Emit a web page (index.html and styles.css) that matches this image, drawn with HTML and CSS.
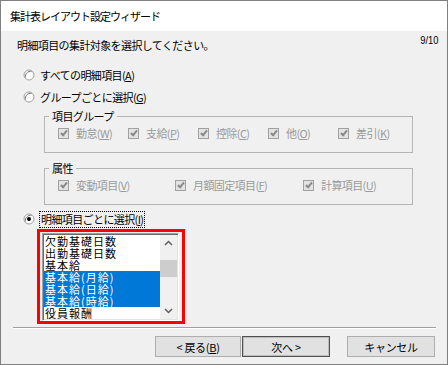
FILE: index.html
```html
<html>
<head>
  <meta charset="UTF-8" />
  <title>集計表レイアウト設定ウィザード</title>
  <link rel="stylesheet" href="styles.css">
</head>
<body>

  <div class="window">
    <div class="titlebar">集計表レイアウト設定ウィザード</div>

    <div class="content">
      <div class="head">
        <p class="prompt">明細項目の集計対象を選択してください。</p>
        <span class="page">9/10</span>
      </div>

      <label class="radio">
        <svg width="12" height="12" viewBox="0 0 12 12"><circle cx="6" cy="6" r="5" fill="#fff" stroke="#a0a0a0"/><path d="M2.5 8.5 A5 5 0 0 1 8.5 2.5" fill="none" stroke="#7a7a7a"/></svg>
        <span>すべての明細項目(<u>A</u>)</span>
      </label>
      <label class="radio">
        <svg width="12" height="12" viewBox="0 0 12 12"><circle cx="6" cy="6" r="5" fill="#fff" stroke="#a0a0a0"/><path d="M2.5 8.5 A5 5 0 0 1 8.5 2.5" fill="none" stroke="#7a7a7a"/></svg>
        <span>グループごとに選択(<u>G</u>)</span>
      </label>

      <fieldset class="group">
        <legend>項目グループ</legend>
        <div class="checks checks-five">
          <span class="check"><i class="box"></i><span>勤怠(<u>W</u>)</span></span>
          <span class="check"><i class="box"></i><span>支給(<u>P</u>)</span></span>
          <span class="check"><i class="box"></i><span>控除(<u>C</u>)</span></span>
          <span class="check"><i class="box"></i><span>他(<u>O</u>)</span></span>
          <span class="check"><i class="box"></i><span>差引(<u>K</u>)</span></span>
        </div>
      </fieldset>

      <fieldset class="group group-attr">
        <legend>属性</legend>
        <div class="checks checks-three">
          <span class="check"><i class="box"></i><span>変動項目(<u>V</u>)</span></span>
          <span class="check"><i class="box"></i><span>月額固定項目(<u>F</u>)</span></span>
          <span class="check"><i class="box"></i><span>計算項目(<u>U</u>)</span></span>
        </div>
      </fieldset>

      <label class="radio radio-last">
        <svg width="12" height="12" viewBox="0 0 12 12"><circle cx="6" cy="6" r="5" fill="#fff" stroke="#a0a0a0"/><path d="M2.5 8.5 A5 5 0 0 1 8.5 2.5" fill="none" stroke="#7a7a7a"/><circle cx="6" cy="6" r="2" fill="#000"/></svg>
        <span class="focus">明細項目ごとに選択(<u>I</u>)</span>
      </label>

      <div class="picker">
        <div class="listbox">
          <ul class="items">
            <li>欠勤基礎日数</li>
            <li>出勤基礎日数</li>
            <li>基本給</li>
            <li class="selected">基本給(月給)</li>
            <li class="selected">基本給(日給)</li>
            <li class="selected">基本給(時給)</li>
            <li>役員報酬</li>
          </ul>
          <div class="scrollbar">
            <svg width="17" height="17" viewBox="0 0 17 17"><path d="M5 10 L8.5 6.5 L12 10" fill="none" stroke="#606060" stroke-width="1.5"/></svg>
            <div class="track"><div class="thumb"></div></div>
            <svg width="17" height="17" viewBox="0 0 17 17"><path d="M5 7 L8.5 10.5 L12 7" fill="none" stroke="#606060" stroke-width="1.5"/></svg>
          </div>
        </div>
      </div>

      <div class="separator"></div>

      <div class="buttons">
        <button class="btn btn-back">&lt;&nbsp;戻る(<u>B</u>)</button>
        <button class="btn btn-next">次へ&nbsp;&gt;</button>
        <button class="btn btn-cancel">キャンセル</button>
      </div>
    </div>
  </div>

</body>
</html>
```

FILE: styles.css
```css
body {
  margin: 0;
  font-family: "Noto Sans CJK JP", "Noto Sans", sans-serif;
  font-size: 11px;
  color: #000;
  background-color: #f0f0f0;
}
.window {
  width: 448px;
  height: 365px;
  box-sizing: border-box;
  border: 1px solid #808080;
  background-color: #f0f0f0;
  overflow: hidden;
}
.titlebar {
  height: 30px;
  line-height: 30px;
  padding-left: 9px;
  background-color: #fff;
  letter-spacing: -1px;
}
.content {
  display: flex;
  flex-direction: column;
  align-items: flex-start;
}
.head {
  display: flex;
  justify-content: space-between;
  align-self: stretch;
  padding: 0 9px 0 16px;
}
.prompt {
  margin: 6px 0 0 0;
  line-height: 16px;
  letter-spacing: -0.6px;
}
.page {
  margin-top: 2px;
  line-height: 14px;
  font-family: "Liberation Sans", sans-serif;
  font-size: 11px;
  transform: scaleX(0.85);
  transform-origin: right;
}
.radio {
  display: flex;
  align-items: center;
  gap: 5px;
  height: 22px;
  margin-left: 22px;
  letter-spacing: -0.6px;
}
.radio:first-of-type {
  margin-top: 11px;
}
.radio-last {
  height: 20px;
  margin-top: 4px;
}
.focus {
  outline: 1px dotted #000;
  outline-offset: 0;
  padding: 0 1px;
  line-height: 15px;
}
.group {
  width: 369px;
  box-sizing: border-box;
  margin: 0 0 0 43px;
  padding: 1px 0 11px 13px;
  border: 1px solid #b4b4b4;
  min-inline-size: 0;
}
.group legend {
  margin-left: -9px;
  padding: 0 3px;
  line-height: 16px;
  letter-spacing: -0.6px;
}
.group-attr {
  margin-top: 7px;
}
.checks {
  display: grid;
  height: 16px;
  align-items: center;
  color: #9a9a9a;
  letter-spacing: -0.6px;
}
.checks-five {
  grid-template-columns: 70px 70px 70px 70px auto;
}
.checks-three {
  grid-template-columns: 117px 128px auto;
}
.check {
  display: flex;
  align-items: center;
  gap: 7px;
}
.box {
  position: relative;
  width: 9px;
  height: 9px;
  border: 1px solid #a0a0a0;
  background-color: #e3e3e3;
}
.box::after {
  content: "";
  position: absolute;
  left: 3px;
  top: 0;
  width: 2px;
  height: 5px;
  border: solid #8a8a8a;
  border-width: 0 2px 2px 0;
  transform: rotate(40deg);
}
.picker {
  margin-left: 36px;
  border: 3px solid #ff0000;
  padding: 1px 3px 0 2px;
}
.listbox {
  display: flex;
  border: 1px solid;
  border-color: #a0a0a0 #fff #fff #a0a0a0;
  box-shadow: inset 1px 1px 0 #696969, inset -1px -1px 0 #e3e3e3;
  padding: 1px;
  background-color: #fff;
}
.items {
  list-style: none;
  margin: 0;
  padding: 0;
  width: 116px;
  height: 84px;
  overflow: hidden;
  font-size: 11px;
  line-height: 12px;
  letter-spacing: 1px;
}
.items li {
  height: 12px;
  padding-left: 1px;
  white-space: nowrap;
}
.items li.selected {
  background-color: #0078d7;
  color: #fff;
}
.scrollbar {
  display: flex;
  flex-direction: column;
  width: 17px;
  height: 84px;
  background-color: #f0f0f0;
}
.track {
  flex: 1;
  padding-top: 8px;
}
.thumb {
  height: 17px;
  background-color: #cdcdcd;
}
.separator {
  align-self: stretch;
  margin: 3px 11px 0 12px;
  border-top: 1px solid #a0a0a0;
  border-bottom: 1px solid #fff;
}
.buttons {
  display: flex;
  margin: 7px 0 0 154px;
}
.btn {
  height: 21px;
  padding: 0;
  font-family: inherit;
  font-size: 11px;
  letter-spacing: -0.3px;
  background-color: #e1e1e1;
  border: 1px solid #adadad;
  color: #000;
}
.btn-back {
  width: 86px;
}
.btn-next {
  width: 88px;
  margin-left: 1px;
  border-color: #505050;
  box-shadow: inset 0 0 0 1px #bcbcbc;
}
.btn-cancel {
  width: 88px;
  margin-left: 17px;
}
```
